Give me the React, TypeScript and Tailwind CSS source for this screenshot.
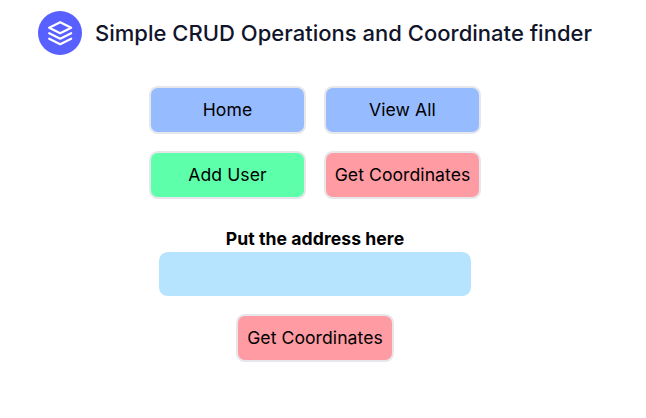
const btn = "flex h-12 items-center justify-center rounded-[8.8px] border-2 border-gray-200 text-[17.6px] tracking-[0.06px] text-black";

export default function App() {
  return (
    <div className="h-[418px] w-[646px] overflow-hidden bg-white font-['Inter',sans-serif]">
      <header className="flex items-center pl-[38px] pt-[11px]">
        <span className="flex size-11 items-center justify-center rounded-full bg-[#5860ff] text-white">
          <svg viewBox="0 0 24 24" fill="none" stroke="currentColor" strokeWidth="2" strokeLinecap="round" strokeLinejoin="round" className="size-[26.4px]">
            <path d="M12 2L2 7l10 5 10-5-10-5zM2 17l10 5 10-5M2 12l10 5 10-5" />
          </svg>
        </span>
        <h1 className="ml-[13px] whitespace-nowrap text-[22px] font-medium tracking-[0.015px] text-[#11152b]">Simple CRUD Operations and Coordinate finder</h1>
      </header>
      <nav className="ml-[149px] mt-[31px] grid w-fit grid-cols-[157px_157px] gap-x-[18px] gap-y-[17px]">
        <button className={`${btn} bg-[#96bbff]`}>Home</button>
        <button className={`${btn} bg-[#96bbff]`}>View All</button>
        <button className={`${btn} bg-[#5dffab]`}>Add User</button>
        <button className={`${btn} bg-[#ff9ba3]`}>Get Coordinates</button>
      </nav>
      <main className="flex w-[630px] flex-col items-center pt-[26px]">
        <label htmlFor="address" className="text-[17.6px] font-bold leading-[27px] tracking-[0.06px] text-black">Put the address here</label>
        <input id="address" className="h-11 w-[312px] rounded-[8.8px] bg-[#b6e4ff]" />
        <button className={`${btn} mt-[18px] w-[158px] bg-[#ff9ba3]`}>Get Coordinates</button>
      </main>
    </div>
  );
}
